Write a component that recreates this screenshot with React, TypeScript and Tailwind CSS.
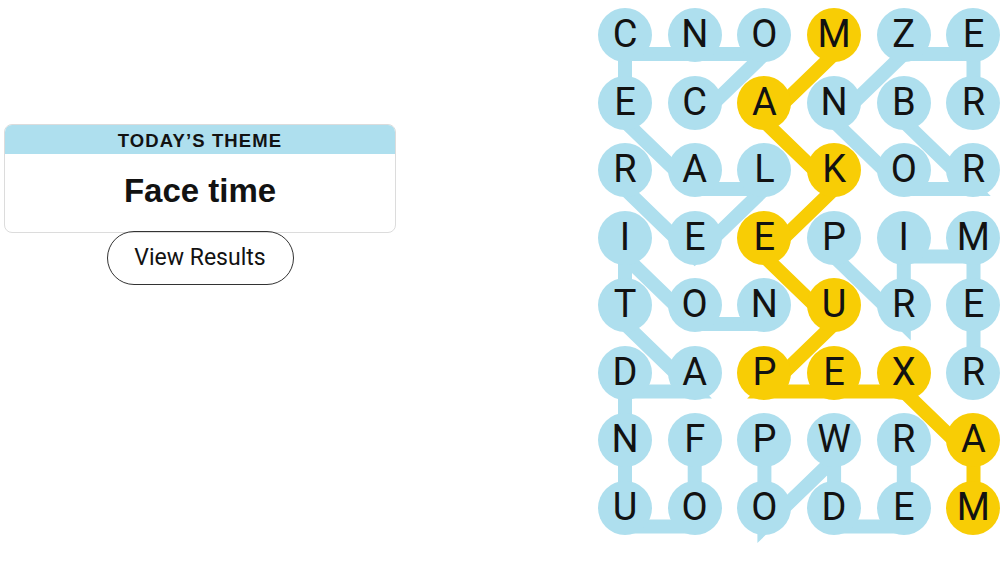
const BLUE = "#aedfee";
const YELLOW = "#f8cd05";

const letters = [
  "CNOMZE",
  "ECANBR",
  "RALKOR",
  "IEEPIM",
  "TONURE",
  "DAPEXR",
  "NFPWRA",
  "UOODEM",
];

// [row, col] paths of the found words
const words: [number, number][][] = [
  [[1, 1], [0, 2], [0, 1], [0, 0], [1, 0], [2, 1], [2, 2], [3, 1], [2, 0]],
  [[1, 4], [2, 5], [2, 4], [1, 3], [0, 4], [0, 5], [1, 5]],
  [[6, 1], [7, 1], [7, 0], [6, 0], [5, 0], [5, 1], [4, 0], [3, 0], [4, 1], [4, 2]],
  [[3, 3], [4, 4], [3, 4], [3, 5], [4, 5], [5, 5]],
  [[6, 2], [7, 2], [6, 3], [7, 3], [7, 4], [6, 4]],
];

const spangram: [number, number][] = [
  [0, 3], [1, 2], [2, 3], [3, 2], [4, 3], [5, 2], [5, 3], [5, 4], [6, 5], [7, 5],
];

const isSpangram = (r: number, c: number) =>
  spangram.some(([sr, sc]) => sr === r && sc === c);

const pts = (path: [number, number][]) =>
  path.map(([r, c]) => `${27 + c * 69.7},${27 + r * 67.5 + 19}`).join(" ");

function Board() {
  return (
    <div className="relative">
      <svg
        className="absolute left-0 top-0 overflow-visible"
        width={403}
        height={545}
      >
        {words.map((w, i) => (
          <polyline key={i} points={pts(w)} fill="none" stroke={BLUE} strokeWidth={14} />
        ))}
        <polyline points={pts(spangram)} fill="none" stroke={YELLOW} strokeWidth={14} />
      </svg>
      <div className="relative grid grid-cols-[repeat(6,54px)] gap-x-[15.7px] gap-y-[13.5px]">
        {letters.map((row, r) =>
          row.split("").map((ch, c) => (
            <div
              key={`${r}-${c}`}
              className={`flex h-[54px] w-[54px] items-center justify-center rounded-full pb-[2px] font-['Roboto',sans-serif] text-[38px] leading-none text-[#121212] ${
                isSpangram(r, c) ? "bg-[#f8cd05]" : "bg-[#aedfee]"
              }`}
            >
              {ch}
            </div>
          ))
        )}
      </div>
    </div>
  );
}

export default function App() {
  return (
    <div className="flex h-[564px] w-[1002px] overflow-hidden bg-white font-['Liberation_Sans',sans-serif] text-[#121212]">
      {/* Theme panel */}
      <div className="flex w-[400px] flex-col items-center px-[4px] pt-[124px]">
        <div className="w-full overflow-hidden rounded-lg border border-[#dcdcdc]">
          <div className="flex h-[29px] items-center justify-center bg-[#aedfee] pt-[3px] text-[18.5px] font-bold tracking-[1.1px]">
            TODAY’S THEME
          </div>
          <div className="flex h-[78px] items-center justify-center pb-[5px] text-[33px] font-bold">
            Face time
          </div>
        </div>
        <button className="mt-[-2px] h-[54px] w-[187px] rounded-full border border-[#333] font-['Roboto',sans-serif] text-[23px]">
          View Results
        </button>
      </div>

      {/* Board */}
      <div className="ml-[198px] pt-[8px]">
        <Board />
      </div>
    </div>
  );
}
